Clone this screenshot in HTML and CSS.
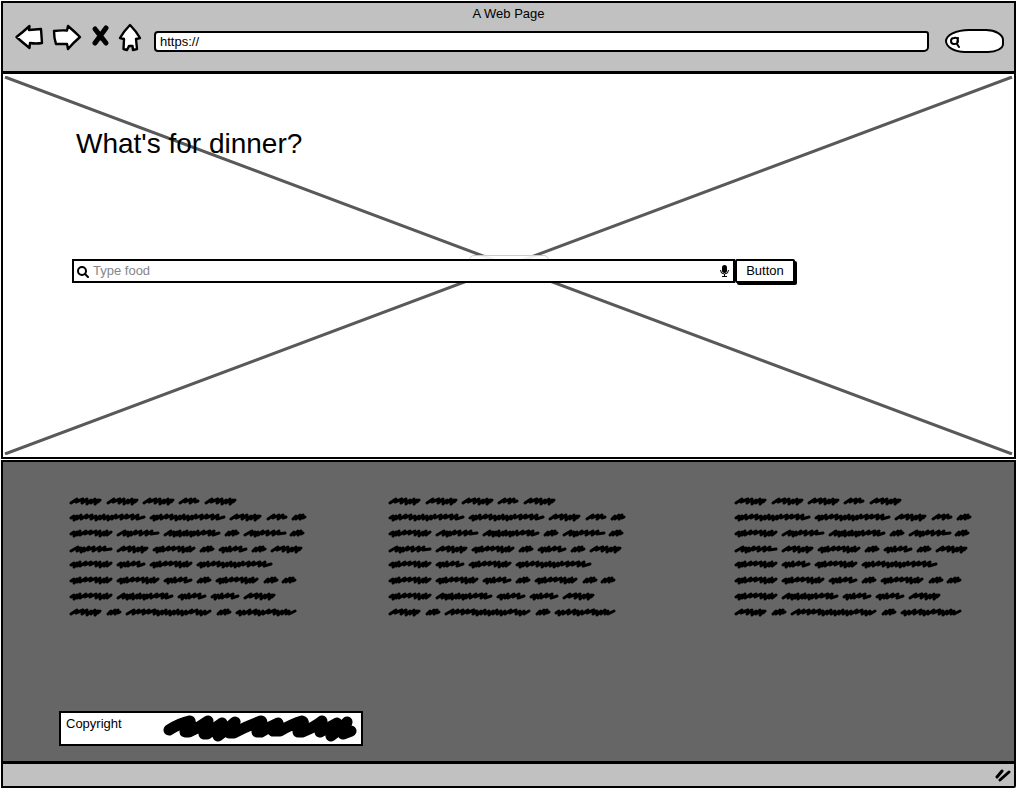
FILE: index.html
```html
<!DOCTYPE html>
<html lang="en">
<head>
<meta charset="utf-8">
<meta name="viewport" content="width=device-width, initial-scale=1">
<title>A Web Page</title>
<link rel="stylesheet" href="styles.css">
</head>
<body>
<div class="window">
  <header class="chrome">
    <p class="window-title">A Web Page</p>
    <div class="toolbar">
      <nav class="nav" aria-label="Browser">
        <button class="icon-button" type="button" aria-label="Back">
          <svg width="28" height="28" viewBox="0 0 28 28"><path class="outline" d="M1.500 13Q8 8 14.500 2L14 6 26 5 27 19Q21 20 15 19L14.500 24Q7 18 1.500 13Z"/></svg>
        </button>
        <button class="icon-button" type="button" aria-label="Forward">
          <svg width="28" height="28" viewBox="0 0 28 28"><path class="outline" d="M1 7Q8 6 14 6.500L15 2Q22 8 27 13 20 19 15 25L14 20 3 20Q1 14 1 7Z"/></svg>
        </button>
        <button class="icon-button" type="button" aria-label="Stop">
          <svg width="18" height="28" viewBox="0 0 18 28"><path class="stop" d="M4 5 15 19M15 4 4 19M9 10 9 14"/></svg>
        </button>
        <button class="icon-button" type="button" aria-label="Home">
          <svg width="22" height="28" viewBox="0 0 22 28"><path class="outline" d="M11 1Q17 7 21 14L17 15 18 25 14 26 13.500 22 10 22 8 26 4.500 25 5 15 1 14Q5 7 11 1Z"/></svg>
        </button>
      </nav>
      <input class="address" type="text" value="https://" aria-label="Address">
      <label class="quick-search">
        <svg width="12" height="13" viewBox="0 0 12 13"><path class="lens" d="M2 6Q2 3 5 3 9 2 9 6 9 9 5 9 2 9 2 6M9 3 8 9 10 12"/></svg>
        <input class="quick-input" type="text" aria-label="Web search">
      </label>
    </div>
  </header>

  <main class="hero">
    <svg class="cross" viewBox="0 0 1008 378" preserveAspectRatio="none" aria-hidden="true"><path d="M1 1 1007 377M1 377 1007 1"/></svg>
    <div class="cross-tag"></div>
    <h1 class="heading">What's for dinner?</h1>
    <form class="search">
      <label class="search-box">
        <svg width="12" height="13" viewBox="0 0 12 13"><circle class="lens" cx="5" cy="6" r="4"/><path class="lens" d="M8 9 11 12"/></svg>
        <input class="search-input" type="text" placeholder="Type food" aria-label="Type food">
        <svg width="10" height="12" viewBox="0 0 10 12"><rect x="3" y="0" width="5" height="8" rx="2.500"/><path class="mic" d="M1.500 5Q1.500 9 5.500 9 9.500 9 9.500 5M5.500 9V11M3 11.500H8"/></svg>
      </label>
      <button class="search-button" type="button">Button</button>
    </form>
  </main>

  <footer class="footer">
    <svg class="defs" width="0" height="0" aria-hidden="true">
      <defs>
        <path id="w15" d="M2 2 5-1 5 2 9-2 9 2 12-2 12 1 14 0"/>
        <path id="w21" d="M2 2 8-2 7 1 13-2 12 2 17-2 17 1 20 0"/>
        <path id="w29" d="M2 1 5-1 5 3 8-1 9 2 12-2 12 2 18-2 17 1 23-2 22 2 28 0"/>
        <path id="w32" d="M2 2 8-2 7 1 14-2 13 2 18-2 18 3 22-1 22 2 26-2 26 3 29-1 29 1 31-1"/>
        <path id="w43" d="M2 1 5-1 5 3 8-1 8 2 11-2 11 2 17-2 16 1 22-2 21 1 27-2 27 2 31-2 31 3 35-1 35 2 38-2 38 2 42-1"/>
        <path id="w43b" d="M2 2 9-2 8 2 12-1 12 3 15-1 15 2 20-2 19 1 25-2 24 2 31-2 30 2 36-2 35 1 42 0"/>
        <path id="w57" d="M2 2 8-2 7 2 11-1 11 3 14-1 14 2 17-2 17 3 21-1 21 2 24-2 24 2 28-1 28 3 31-1 31 2 35-2 35 2 41-2 40 1 47-2 46 2 51-2 50 2 56 0"/>
        <path id="w61" d="M2 1 5-1 5 3 9-1 9 2 15-2 14 2 21-2 20 2 24-1 24 3 28-1 28 2 34-2 33 1 40-2 39 2 43-1 43 3 47-1 47 2 51-2 51 2 54-1 54 2 60-1"/>
        <path id="w76" d="M2 1 5-1 5 3 8-1 8 2 12-2 12 2 18-2 17 1 23-2 22 2 27-1 27 3 31-1 31 2 35-2 35 2 39-1 39 3 43-1 43 2 47-2 47 1 53-2 52 2 58-2 57 1 64-2 63 2 69-2 68 2 75 0"/>
        <path id="w86" d="M2 2 9-2 8 2 14-2 13 1 19-2 18 2 24-2 23 1 30-2 29 2 33-1 33 3 37-1 37 2 41-2 41 2 45-1 45 3 49-1 49 2 53-2 53 2 57-1 57 3 61-1 61 2 67-2 66 1 72-2 72 2 76-1 76 3 80-1 80 2 85-1"/>
        <g id="lines">
          <use href="#w32" x="0" y="5"/><use href="#w32" x="37" y="5"/><use href="#w32" x="73" y="5"/><use href="#w21" x="109" y="5"/><use href="#w32" x="135" y="5"/>
          <use href="#w76" x="0" y="21"/><use href="#w76" x="80" y="21"/><use href="#w32" x="160" y="21"/><use href="#w21" x="197" y="21"/><use href="#w15" x="222" y="21"/>
          <use href="#w43" x="0" y="37"/><use href="#w43b" x="47" y="37"/><use href="#w57" x="94" y="37"/><use href="#w15" x="155" y="37"/><use href="#w43b" x="174" y="37"/><use href="#w15" x="220" y="37"/>
          <use href="#w43b" x="0" y="53"/><use href="#w32" x="47" y="53"/><use href="#w43" x="83" y="53"/><use href="#w15" x="130" y="53"/><use href="#w29" x="149" y="53"/><use href="#w15" x="182" y="53"/><use href="#w32" x="201" y="53"/>
          <use href="#w43" x="0" y="68"/><use href="#w29" x="47" y="68"/><use href="#w43" x="80" y="68"/><use href="#w76" x="127" y="68"/>
          <use href="#w43" x="0" y="84"/><use href="#w43" x="47" y="84"/><use href="#w29" x="94" y="84"/><use href="#w15" x="127" y="84"/><use href="#w43" x="146" y="84"/><use href="#w15" x="194" y="84"/><use href="#w15" x="212" y="84"/>
          <use href="#w43" x="0" y="100"/><use href="#w57" x="47" y="100"/><use href="#w29" x="108" y="100"/><use href="#w29" x="141" y="100"/><use href="#w32" x="174" y="100"/>
          <use href="#w32" x="0" y="116"/><use href="#w15" x="37" y="116"/><use href="#w86" x="56" y="116"/><use href="#w15" x="147" y="116"/><use href="#w61" x="166" y="116"/>
        </g>
      </defs>
    </svg>
    <div class="columns">
      <svg class="scribble" width="240" height="122" viewBox="0 0 240 122"><use href="#lines"/></svg>
      <svg class="scribble" width="240" height="122" viewBox="0 0 240 122"><use href="#lines"/></svg>
      <svg class="scribble" width="240" height="122" viewBox="0 0 240 122"><use href="#lines"/></svg>
    </div>
    <div class="copyright">
      <span>Copyright</span>
      <svg width="196" height="29" viewBox="0 0 196 29" aria-hidden="true"><path class="marker" d="M7 15Q18 8 28 6 30 8 23 17L27 17Q38 12 46 6L42 19 45 19Q53 13 60 8L56 21Q66 14 73 7L67 18 72 18Q85 11 99 6 102 7 95 17L99 17Q107 12 116 8L111 16 118 16Q130 9 140 6 144 7 136 17L140 17Q153 12 160 6L158 17Q168 12 175 8L169 21Q178 15 185 7L181 19 189 16"/></svg>
    </div>
  </footer>

  <div class="status">
    <svg width="18" height="14" viewBox="0 0 18 14" aria-hidden="true"><path class="grip" d="M3 9 8 3M6 12 15 4"/></svg>
  </div>
</div>
</body>
</html>
```

FILE: styles.css
```css
* {
  box-sizing: border-box;
}

body {
  margin: 0;
  background: #fff;
  color: #000;
  font: 13px/16px "Liberation Sans", Arial, sans-serif;
}

input,
button {
  font: inherit;
  color: inherit;
}

.window {
  display: flex;
  flex-direction: column;
  min-height: 100vh;
  padding: 1px;
}

.chrome {
  height: 71px;
  padding: 3px 10px 0 12px;
  background: #c1c1c1;
  border: 2px solid #000;
  border-bottom-width: 1px;
}

.window-title {
  margin: 0;
  padding-right: 2px;
  text-align: center;
}

.toolbar {
  display: flex;
  align-items: center;
  gap: 16px;
}

.nav {
  display: flex;
  gap: 10px;
}

.icon-button {
  display: flex;
  padding: 0;
  border: 0;
  background: none;
}

.icon-button svg {
  overflow: visible;
}

.outline {
  fill: #fff;
  stroke: #000;
  stroke-width: 2.4;
  stroke-linejoin: round;
}

.stop {
  fill: none;
  stroke: #000;
  stroke-width: 5;
  stroke-linecap: round;
}

.lens {
  fill: none;
  stroke: #000;
  stroke-width: 2;
  stroke-linecap: round;
}

.address {
  flex: 1;
  min-width: 0;
  height: 21px;
  margin: 7px 0 0 -3px;
  padding: 0 4px;
  background: #fff;
  border: 2px solid #000;
  border-radius: 4px 3px 5px 4px;
}

.quick-search {
  display: flex;
  align-items: center;
  width: 59px;
  height: 24px;
  margin-top: 7px;
  padding: 0 2px;
  background: #fff;
  border: 2px solid #000;
  border-radius: 24px 18px 16px 20px / 12px 11px 9px 12px;
}

.quick-input {
  flex: 1;
  min-width: 0;
  padding: 0;
  border: 0;
  background: none;
}

.hero {
  position: relative;
  flex: 387 0 387px;
  padding: 53px 219px 0 69px;
  background: #fff;
  border: 2px solid #000;
}

.cross {
  position: absolute;
  inset: 2px 1px;
  width: calc(100% - 2px);
  height: calc(100% - 4px);
  fill: none;
  stroke: #595959;
  stroke-width: 3;
}

.cross-tag {
  position: absolute;
  left: 50%;
  top: 50%;
  width: 80px;
  height: 22px;
  transform: translate(-50%, -50%);
  background: rgba(255, 255, 255, 0.9);
  border: 1px solid #ccc;
  border-radius: 5px;
}

.heading {
  position: relative;
  margin: 0 0 98px 4px;
  font-size: 28px;
  font-weight: 400;
  line-height: 34px;
}

.search {
  position: relative;
  display: flex;
  align-items: center;
}

.search-box {
  display: flex;
  flex: 1;
  align-items: center;
  gap: 4px;
  height: 24px;
  padding: 0 4px 0 3px;
  background: #fff;
  border: 2px solid #000;
}

.search-input {
  flex: 1;
  min-width: 0;
  padding: 0;
  border: 0;
  background: none;
}

.search-input::placeholder {
  color: #85858c;
}

.mic {
  fill: none;
  stroke: #000;
}

.search-button {
  height: 24px;
  width: 60px;
  padding: 0;
  background: #fff;
  border: 2px solid #000;
  border-radius: 2px;
  box-shadow: 2px 2px 0 #000;
}

.footer {
  display: flex;
  flex: 303 0 303px;
  flex-direction: column;
  justify-content: space-between;
  margin-top: 1px;
  padding: 34px 0 15px 56px;
  background: #666;
  border: 2px solid #000;
}

.defs {
  position: absolute;
}

.columns {
  display: grid;
  grid-template-columns: 319fr 346fr 280fr;
  padding-left: 10px;
}

.scribble {
  fill: none;
  stroke: #000;
  stroke-width: 3;
  stroke-linecap: round;
  stroke-linejoin: round;
}

.copyright {
  display: flex;
  justify-content: space-between;
  width: 304px;
  height: 35px;
  padding: 2px 3px 0 5px;
  background: #fff;
  border: 2px solid #000;
}

.copyright span {
  padding-top: 1px;
}

.marker {
  fill: none;
  stroke: #000;
  stroke-width: 11;
  stroke-linecap: round;
  stroke-linejoin: round;
}

.status {
  display: flex;
  align-items: center;
  justify-content: flex-end;
  height: 25px;
  padding-right: 2px;
  background: #c1c1c1;
  border: solid #000;
  border-width: 1px 2px 2px;
  border-bottom-right-radius: 2px;
}

.grip {
  fill: none;
  stroke: #000;
  stroke-width: 3;
  stroke-linecap: round;
}
```
